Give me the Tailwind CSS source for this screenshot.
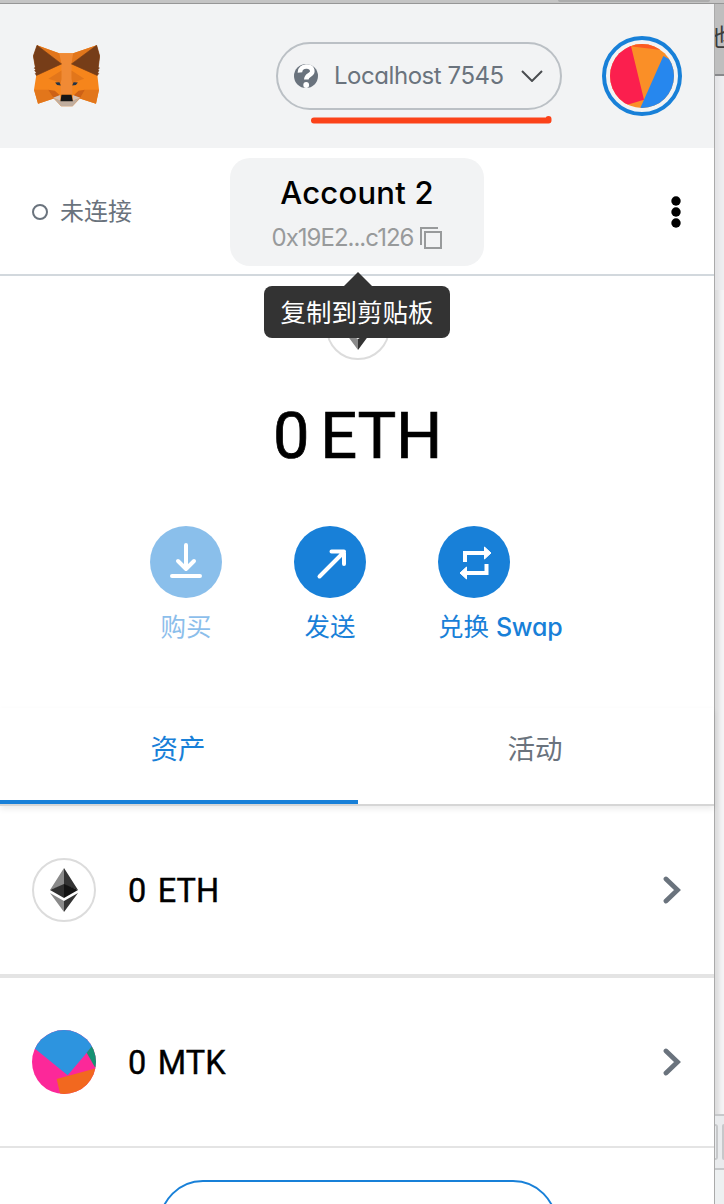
<!DOCTYPE html>
<html lang="zh-CN">
<head>
<meta charset="utf-8">
<title>Wallet</title>
<script src="https://cdn.jsdelivr.net/npm/@tailwindcss/browser@4"></script>
</head>
<body class="bg-white">
<div class="relative flex h-[1204px] w-[724px] flex-col overflow-hidden bg-[#f4f4f5] font-['Inter','Noto_Sans_CJK_SC',sans-serif] [font-feature-settings:'cv11']">
  <div class="flex h-1 w-full shrink-0 justify-end border-b border-[#969696] bg-[#c4c4c4]"><div class="mr-[14px] h-[2px] w-[152px] rounded-b-full bg-[#acacac]"></div></div>
  <div class="flex flex-1">
    <main class="flex h-[1200px] w-[714px] shrink-0 flex-col bg-white">
      <header class="flex h-36 shrink-0 items-center bg-[#f2f3f4] pl-[33px] pr-8">
        <svg class="h-[62px] w-[67px]" viewBox="40 45 200 187" preserveAspectRatio="none">
          <path fill="#f6851b" d="M52 46l66 24h42l70-24 9 32-7 57 5 45-9 42-48-16-22 24h-34l-22-24-47 16-12-42 7-45-9-57z"/>
          <path fill="#f08a35" d="M125 102l-7-32h42l-5 32 3 92h-36z"/>
          <path fill="#e2761b" d="M52 46l66 24 7 32zM230 46l-70 24-5 32zM43 180h42l17 26-47 16zM237 180h-42l-15 26 48 16z"/>
          <path fill="#763d18" stroke="#763d18" stroke-width="2" d="M52 46l73 56-75 35-3-6 3-4-5-4 3-4-4-4 3-4-6-33zM230 46l-75 56 77 35 4-6-3-4 4-4-3-4 4-4-3-4 4-33z"/>
          <path fill="#e2761b" d="M86 147l39-25v26l-4 18-12-12zM193 147l-38-25v26l4 18 12-12z"/>
          <path fill="#cd6116" d="M85 180l20 3 16 14-19 9zM195 180l-19 3-15 14 19 9z"/>
          <path fill="#c0ad9e" d="M100 204l22 9h36l23-9-23 26h-34z"/>
          <path fill="#d7c1b3" d="M100 204l21-8 1 17zM181 204l-22-8-1 17z"/>
          <path fill="#161616" d="M125 195h30l4 20h-37z"/>
          <path fill="#233447" d="M106 158l13 -1 4 10-11-1zM174 158l-13 -1-4 10 11-1z"/>
        </svg>
        <div class="relative ml-[176px] flex h-[68px] w-[286px] items-center rounded-full border-2 border-[#bbc0c5] pl-4">
          <svg class="size-6 shrink-0" viewBox="0 0 24 24"><circle cx="12" cy="12" r="12" fill="#6a737d"/><path d="M6 8.500C5.500 1.500 18.500 0 18.300 7.500C18 11.500 12.300 10.500 12.300 15.500" fill="none" stroke="#fff" stroke-width="4.600"/><circle cx="12.200" cy="21" r="2.900" fill="#fff"/></svg>
          <span class="ml-4 w-[170px] whitespace-nowrap text-[24px] leading-8 tracking-[-0.45px] text-[#6a737d]">Localhost 7545</span>
          <svg class="ml-[17px] h-3 w-[22px]" viewBox="0 0 22 12"><path d="M1 1l10 10L21 1" fill="none" stroke="#4a4d50" stroke-width="2"/></svg>
          <svg class="absolute left-[32px] top-[69px] h-[12px] w-[244px]" viewBox="0 0 244 12"><path d="M4 7.500H238.500V6" fill="none" stroke="#fb4219" stroke-width="6" stroke-linecap="round" stroke-linejoin="round"/></svg>
        </div>
        <svg class="ml-10 size-20" viewBox="36 108 240 240">
          <defs><clipPath id="av"><circle cx="156" cy="228" r="96"/></clipPath></defs>
          <circle cx="156" cy="228" r="114" fill="#f2f3f4" stroke="#1880d8" stroke-width="12"/>
          <g clip-path="url(#av)"><path fill="#fa8f27" d="M60 130h200v200H60z"/><path fill="#fb5a22" d="M110 120h110v31l-100-12z"/><path fill="#fb1f4e" d="M50 130h71l41 169-60 18-52 20z"/><path fill="#2687ee" d="M220 168l45 24v150H148l4-20z"/></g>
        </svg>
      </header>

      <section class="relative flex h-32 shrink-0 items-center border-b-2 border-[#d2d8dd] pl-8 pr-[33px] pt-[2px]">
        <div class="flex w-[198px] items-center gap-3">
          <span class="size-4 rounded-full border-2 border-[#6a737d]"></span>
          <span class="text-[24px] leading-8 text-[#6a737d]">未连接</span>
        </div>
        <div class="flex h-[108px] w-[254px] flex-col items-center rounded-[20px] bg-[#f2f3f4] pt-[13px]">
          <div class="whitespace-nowrap text-[31px] font-medium leading-[44px] tracking-[0.25px] text-black">Account 2</div>
          <div class="mt-[7px] flex items-center gap-[7px] text-[24px] leading-8 text-[#989a9b]">
            <span class="whitespace-nowrap tracking-[-1px]">0x19E2...c126</span>
            <svg class="size-[22px]" viewBox="0 0 22 22" fill="none" stroke="#989a9b" stroke-width="2"><path d="M18 1H1v17M5 5h16v16H5z"/></svg>
          </div>
        </div>
        <svg class="ml-auto h-8 w-[10px]" viewBox="0 0 10 32"><circle cx="5" cy="5" r="4.700"/><circle cx="5" cy="16" r="4.700"/><circle cx="5" cy="27" r="4.700"/></svg>
        <div class="absolute left-[264px] top-[124px] z-10 flex w-[186px] flex-col items-center">
          <svg class="ml-[2px] h-[14px] w-7" viewBox="0 0 28 14"><path fill="#333" d="M14 0l14 14H0z"/></svg>
          <div class="flex h-[52px] w-full items-center justify-center whitespace-nowrap rounded-lg bg-[#333] pt-[2px] text-[25.500px] text-white">复制到剪贴板</div>
        </div>
      </section>

      <section class="flex h-[432px] shrink-0 flex-col pt-5">
        <div class="ml-[326px] flex size-16 items-center justify-center rounded-full border-2 border-[#dcdcdc]">
          <svg class="h-11 w-7" viewBox="0 0 28 44"><path fill="#8a8a8a" d="M14 0v28L0 22zM14 33v11L0 25z"/><path fill="#343434" d="M14 0v28l14-6zM14 33v11l14-19z"/></svg>
        </div>
        <div class="ml-[273px] mt-10 whitespace-nowrap font-['Roboto'] text-[65px] leading-[72px] tracking-[-0.4px] [word-spacing:-4.500px] text-black [-webkit-text-stroke:0.7px_black]">0 ETH</div>
        <div class="mt-[54px] flex pl-[114px] text-[25.500px] leading-9 text-[#1880d8]">
          <div class="flex w-36 flex-col items-center opacity-50">
            <svg class="size-[72px]" viewBox="0 0 72 72"><circle cx="36" cy="36" r="36" fill="#1880d8"/><path d="M36 19v24M28 35l8 8 8-8M22 50h28" fill="none" stroke="#fff" stroke-width="4" stroke-linecap="round" stroke-linejoin="round"/></svg>
            <span class="mt-[11px]">购买</span>
          </div>
          <div class="flex w-36 flex-col items-center">
            <svg class="size-[72px]" viewBox="0 0 72 72"><circle cx="36" cy="36" r="36" fill="#1880d8"/><path d="M25.500 50.500L50 26M37.500 25.500H50V38" fill="none" stroke="#fff" stroke-width="4" stroke-linecap="round" stroke-linejoin="round"/></svg>
            <span class="mt-[11px]">发送</span>
          </div>
          <div class="ml-9 flex w-[126px] flex-col items-start">
            <svg class="size-[72px]" viewBox="0 0 72 72"><circle cx="36" cy="36" r="36" fill="#1880d8"/><path d="M27 36v-9h21M48.500 38v9H27" fill="none" stroke="#fff" stroke-width="4"/><path fill="#fff" stroke="#fff" stroke-linejoin="round" d="M46.500 21v12l6.500-6zM28.500 41v12L22 47z"/></svg>
            <span class="mt-[11px] whitespace-nowrap tracking-[-0.1px]">兑换 <span class="text-[25px] font-medium tracking-[-0.2px]">Swap</span></span>
          </div>
        </div>
      </section>

      <nav class="relative z-10 flex h-[98px] shrink-0 border-b-2 border-[#d6d6d6] bg-white text-center text-[27.500px] leading-[82px] shadow-[0_3px_6px_rgba(0,0,0,0.08)]">
        <div class="h-24 w-[358px] border-b-4 border-[#1880d8] pr-[2px] text-[#1880d8]">资产</div>
        <div class="h-24 w-[356px] pr-[2px] text-[#6a737d]">活动</div>
      </nav>

      <div class="flex h-[172px] shrink-0 items-center border-b-4 border-[#e4e4e4] pl-8 pr-[33px]">
        <div class="flex size-16 items-center justify-center rounded-full border-2 border-[#dcdcdc]">
          <svg class="h-11 w-7" viewBox="0 0 28 44"><path fill="#8a8a8a" d="M14 0v17L0 22zM14 33v11L0 25z"/><path fill="#343434" d="M14 0v17l14 5zM14 33v11l14-19z"/><path fill="#303030" d="M14 16v14L0 22z"/><path fill="#141414" d="M14 16v14l14-8z"/></svg>
        </div>
        <span class="ml-8 mt-[2px] whitespace-nowrap font-['Roboto'] text-[32.500px] leading-10 text-black [-webkit-text-stroke:0.4px_black] [word-spacing:3.500px]">0 ETH</span>
        <svg class="ml-auto h-7 w-[18px]" viewBox="0 0 18 28"><path d="M3 3l11.500 11L3 25" fill="none" stroke="#6a737d" stroke-width="4.800" stroke-linecap="round"/></svg>
      </div>
      <div class="flex h-[170px] shrink-0 items-center border-b-2 border-[#e4e4e4] pl-8 pr-[33px]">
        <svg class="size-16" viewBox="36 60 192 192"><defs><clipPath id="tk"><circle cx="132" cy="156" r="96"/></clipPath></defs><g clip-path="url(#tk)"><path fill="#fc2899" d="M30 50h200v210H30z"/><path fill="#2d94df" d="M30 50h210v44l-25 17-72 85-96-78-17-12z"/><path fill="#159273" d="M216 108l20-10v82l-12-10-24-42z"/><path fill="#f2681f" d="M110 207l120-33v80H121z"/></g></svg>
        <span class="ml-8 mt-[2px] whitespace-nowrap font-['Roboto'] text-[32.500px] leading-10 text-black [-webkit-text-stroke:0.4px_black] [word-spacing:3.500px]">0 MTK</span>
        <svg class="ml-auto h-7 w-[18px]" viewBox="0 0 18 28"><path d="M3 3l11.500 11L3 25" fill="none" stroke="#6a737d" stroke-width="4.800" stroke-linecap="round"/></svg>
      </div>
      <div class="flex flex-1 justify-center overflow-hidden pt-8">
        <div class="ml-[2px] h-[88px] w-[398px] shrink-0 rounded-full border-2 border-[#1880d8]"></div>
      </div>
    </main>

    <aside class="flex h-[1200px] w-[10px] flex-col overflow-hidden border-l border-[#aaa] bg-[#f4f4f5] shadow-[inset_4px_0_4px_rgba(0,0,0,0.1)]">
      <div class="h-[72px] shrink-0 overflow-hidden border-b-2 border-[#88898b] bg-[#bebebe]">
        <div class="-ml-[9px] mt-4 w-6 text-[24px] leading-9 text-[#3c3c3c]">他</div>
      </div>
      <div class="h-[214px] shrink-0 bg-[#e9eaed]/60"></div>
      <div class="h-[824px] shrink-0"></div>
      <div class="flex h-14 shrink-0 justify-between border-y-2 border-[#c6c8ca] bg-[#e9ebed] py-2">
        <div class="w-[3px] rounded-r border-2 border-l-0 border-[#c6c8ca]"></div>
        <div class="w-[2px] rounded-l bg-[#c6c8ca]"></div>
      </div>
      <div class="flex-1 bg-[#edf0f1]"></div>
    </aside>
  </div>
</div>
</body>
</html>
